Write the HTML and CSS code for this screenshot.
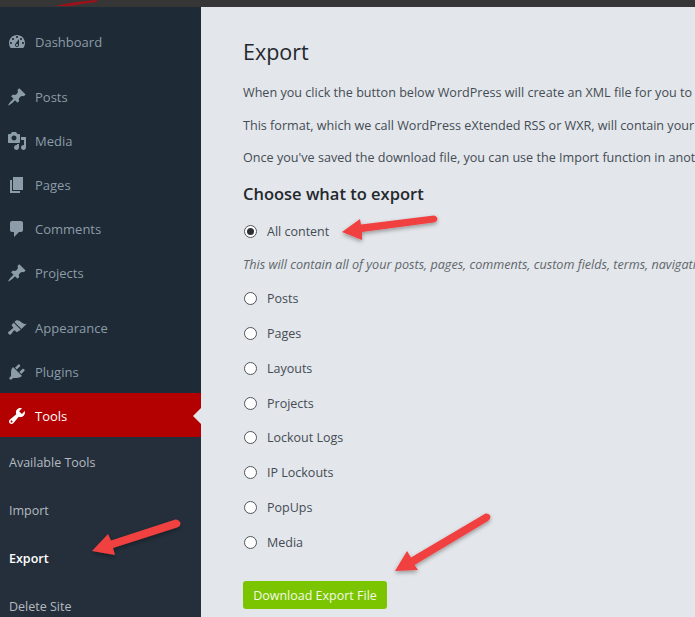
FILE: index.html
```html
<!DOCTYPE html>
<html lang="en">
<head>
<meta charset="utf-8">
<title>Export</title>
<link rel="stylesheet" href="styles.css">
</head>
<body>
<div class="topbar"></div>
<div class="shell">
  <aside class="sidebar">
    <nav class="menu">
      <a class="item"><svg class="icon" viewBox="0 0 20 20"><path fill-rule="evenodd" d="M3.76 16h12.48c1.1-1.37 1.76-3.11 1.76-5 0-4.42-3.58-8-8-8s-8 3.58-8 8c0 1.89.66 3.63 1.76 5zM10 4c.55 0 1 .45 1 1s-.45 1-1 1-1-.45-1-1 .45-1 1-1zM6 6c.55 0 1 .45 1 1s-.45 1-1 1-1-.45-1-1 .45-1 1-1zm8 0c.55 0 1 .45 1 1s-.45 1-1 1-1-.45-1-1 .45-1 1-1zm-5.37 5.55L12 7v6c0 1.1-.9 2-2 2s-2-.9-2-2c0-.57.24-1.08.63-1.45zM4 10c.55 0 1 .45 1 1s-.45 1-1 1-1-.45-1-1 .45-1 1-1zm12 0c.55 0 1 .45 1 1s-.45 1-1 1-1-.45-1-1 .45-1 1-1zm-5 3c0-.55-.45-1-1-1s-1 .45-1 1 .45 1 1 1 1-.45 1-1z"/></svg>Dashboard</a>
      <div class="sep"></div>
      <a class="item"><svg class="icon" viewBox="0 0 20 20"><path d="M10.44 3.02l1.82-1.82 6.36 6.35-1.83 1.82c-1.05-.68-2.48-.57-3.41.36l-.75.75c-.92.93-1.04 2.35-.35 3.41l-1.83 1.82-2.41-2.41-2.8 2.79c-.42.42-3.38 2.71-3.8 2.29s1.86-3.39 2.28-3.81l2.79-2.79L4.1 9.36l1.83-1.82c1.05.69 2.48.57 3.4-.36l.75-.75c.93-.92 1.05-2.35.36-3.41z"/></svg>Posts</a>
      <a class="item"><svg class="icon" viewBox="0 0 20 20"><path fill-rule="evenodd" d="M13 11V4c0-.55-.45-1-1-1h-1.67L9 1H5L3.67 3H2c-.55 0-1 .45-1 1v7c0 .55.45 1 1 1h10c.55 0 1-.45 1-1zM7 4.5c1.38 0 2.5 1.12 2.5 2.5S8.38 9.5 7 9.5 4.5 8.38 4.5 7 5.62 4.5 7 4.5zM14 6h5v10.5c0 1.38-1.12 2.5-2.5 2.5S14 17.88 14 16.5s1.12-2.5 2.5-2.5c.17 0 .34.02.5.05V9h-3V6zm-4 8.05V13h2v3.5c0 1.38-1.12 2.5-2.5 2.5S7 17.88 7 16.5 8.12 14 9.5 14c.17 0 .34.02.5.05z"/></svg>Media</a>
      <a class="item"><svg class="icon" viewBox="0 0 20 20"><path d="M6 15V2h10v13H6zm-1 1h8v2H3V5h2v11z"/></svg>Pages</a>
      <a class="item"><svg class="icon" viewBox="0 0 20 20"><path d="M5 2h9c1.1 0 2 .9 2 2v7c0 1.1-.9 2-2 2h-2l-5 5v-5H5c-1.1 0-2-.9-2-2V4c0-1.1.9-2 2-2z"/></svg>Comments</a>
      <a class="item"><svg class="icon" viewBox="0 0 20 20"><path d="M10.44 3.02l1.82-1.82 6.36 6.35-1.83 1.82c-1.05-.68-2.48-.57-3.41.36l-.75.75c-.92.93-1.04 2.35-.35 3.41l-1.83 1.82-2.41-2.41-2.8 2.79c-.42.42-3.38 2.71-3.8 2.29s1.86-3.39 2.28-3.81l2.79-2.79L4.1 9.36l1.83-1.82c1.05.69 2.48.57 3.4-.36l.75-.75c.93-.92 1.05-2.35.36-3.41z"/></svg>Projects</a>
      <div class="sep"></div>
      <a class="item"><svg class="icon" viewBox="0 0 20 20"><path d="M14.48 11.06L7.41 3.99l1.5-1.5c.5-.56 2.3-.47 3.51.32 1.21.8 1.43 1.28 2.91 2.1 1.18.64 2.45 1.26 4.45.85zm-.71.71L6.7 4.7 4.93 6.47c-.39.39-.39 1.02 0 1.41l1.06 1.06c.39.39.39 1.03 0 1.42-.6.6-1.43 1.11-2.21 1.69-.35.26-.7.53-1.01.84C1.43 13.23.7 14.38 1.17 15.3c.47.92 1.62 1.92 2.67 1.09l.07-.08.3-.3c.3-.31.57-.66.83-1.01.58-.78 1.09-1.61 1.69-2.21.39-.39 1.03-.39 1.42 0l1.06 1.06c.39.39 1.02.39 1.41 0z"/></svg>Appearance</a>
      <a class="item item-short"><svg class="icon" viewBox="0 0 20 20"><path d="M13.11 4.36L9.87 7.6 8 5.73l3.24-3.24c.35-.34 1.05-.2 1.56.32.52.51.66 1.21.31 1.55zm-8 1.77l.91-1.12 9.01 9.01-1.19.84c-.71.71-2.63 1.16-3.82 1.16H6.14L4.9 17.26c-.59.59-1.54.59-2.12 0-.59-.58-.59-1.53 0-2.12l1.24-1.24v-3.88c0-1.13.4-3.19 1.09-3.89zm7.26 3.97l3.24-3.24c.34-.35 1.04-.21 1.55.31.52.51.66 1.21.31 1.55l-3.24 3.25z"/></svg>Plugins</a>
      <a class="item item-active"><svg class="icon" viewBox="0 0 20 20"><path fill-rule="evenodd" d="M16.68 9.77c-1.34 1.34-3.3 1.67-4.95.99l-5.41 6.52c-.99.99-2.59.99-3.58 0s-.99-2.59 0-3.57l6.52-5.42c-.68-1.65-.35-3.61.99-4.95 1.28-1.28 3.12-1.62 4.72-1.06l-2.89 2.89 2.82 2.82 2.86-2.87c.53 1.58.18 3.39-1.08 4.65zM3.81 16.21c.4.39 1.04.39 1.43 0 .4-.4.4-1.04 0-1.43-.39-.4-1.03-.4-1.43 0-.39.39-.39 1.03 0 1.43z"/></svg>Tools</a>
    </nav>
    <nav class="submenu">
      <a class="subitem">Available Tools</a>
      <a class="subitem">Import</a>
      <a class="subitem subitem-current">Export</a>
      <a class="subitem">Delete Site</a>
    </nav>
  </aside>
  <main class="content">
    <h1 class="title">Export</h1>
    <p class="para">When you click the button below WordPress will create an XML file for you to save to your computer.</p>
    <p class="para">This format, which we call WordPress eXtended RSS or WXR, will contain your posts, pages, comments, custom fields, categories, and tags.</p>
    <p class="para">Once you've saved the download file, you can use the Import function in another WordPress installation to import the content from this site.</p>
    <h2 class="subtitle">Choose what to export</h2>
    <form class="options">
      <label class="option"><input class="radio" type="radio" name="content" checked>All content</label>
      <p class="note">This will contain all of your posts, pages, comments, custom fields, terms, navigation menus, and custom posts.</p>
      <label class="option"><input class="radio" type="radio" name="content">Posts</label>
      <label class="option"><input class="radio" type="radio" name="content">Pages</label>
      <label class="option"><input class="radio" type="radio" name="content">Layouts</label>
      <label class="option"><input class="radio" type="radio" name="content">Projects</label>
      <label class="option"><input class="radio" type="radio" name="content">Lockout Logs</label>
      <label class="option"><input class="radio" type="radio" name="content">IP Lockouts</label>
      <label class="option"><input class="radio" type="radio" name="content">PopUps</label>
      <label class="option"><input class="radio" type="radio" name="content">Media</label>
      <button class="download" type="button">Download Export File</button>
    </form>
  </main>
</div>
<svg class="annotations" viewBox="0 0 695 617" aria-hidden="true">
  <defs>
    <filter id="shadow" x="-20%" y="-40%" width="140%" height="200%">
      <feDropShadow dx="0" dy="2" stdDeviation="2" flood-color="#000" flood-opacity=".35"/>
    </filter>
  </defs>
  <path class="scratch" d="M55 6 C68 3 82 1 97 0 L97 2 C84 3 78 5 70 6Z"/>
  <g filter="url(#shadow)">
    <path class="arrow" d="M342 232 L360 219 L361 224.5 L434 215.5 Q437 216 437.5 219 Q437 222 433.5 222.5 L362 232 L362 240Z"/>
    <path class="arrow" d="M92 551 L108 534 L111 540.5 L175.5 519.5 Q179 519.5 180.5 523 Q180.5 526.5 177 527.5 L113 548 L115 555Z"/>
    <path class="arrow" d="M395 571 L407 551 L411 557.5 L485.5 513.5 Q489 513 490.5 516 Q490.5 519.5 488 521 L414.5 565 L418 570Z"/>
  </g>
</svg>
</body>
</html>
```
FILE: styles.css
```css
html, body {
  margin: 0;
  height: 617px;
  overflow: hidden;
  background: #e3e6ea;
}
body {
  font-family: "Open Sans", sans-serif;
  font-size: 13px;
  color: #444c55;
  position: relative;
}
.topbar {
  height: 7px;
  background: #363636;
}
.shell {
  display: flex;
  height: 610px;
  overflow: hidden;
}
.sidebar {
  flex: 0 0 201px;
  background: #1e2a35;
  display: flex;
  flex-direction: column;
  padding-top: 13px;
  box-sizing: border-box;
}
.menu {
  display: flex;
  flex-direction: column;
}
.item {
  height: 44px;
  display: flex;
  align-items: center;
  padding-left: 7px;
  gap: 8px;
  color: #8c9ca8;
  font-size: 13px;
  flex: none;
}
.item-short {
  height: 43px;
}
.icon {
  width: 20px;
  height: 20px;
  fill: #8c9ca8;
  flex: none;
}
.sep {
  height: 11px;
}
.item-active {
  background: #b30000;
  color: #fff;
  position: relative;
  box-sizing: border-box;
  padding-top: 2px;
}
.item-active .icon {
  fill: #fff;
}
.item-active::after {
  content: "";
  position: absolute;
  right: 0;
  top: 15px;
  border: 8px solid transparent;
  border-right-color: #e3e6ea;
  border-left-width: 0;
}
.submenu {
  flex: 1;
  background: #242f3b;
  display: flex;
  flex-direction: column;
  padding-top: 1px;
}
.subitem {
  height: 48px;
  flex: none;
  display: flex;
  align-items: center;
  padding-left: 9px;
  color: #b4bac0;
  font-size: 12.5px;
}
.subitem-current {
  color: #fff;
  font-weight: 600;
}
.content {
  flex: 1;
  min-width: 0;
  padding: 28px 0 0 42px;
  overflow: hidden;
  white-space: nowrap;
}
.title {
  margin: 0;
  font-size: 21.5px;
  line-height: 34px;
  font-weight: 400;
  color: #23282d;
}
.para {
  margin: 0 0 12.5px;
  line-height: 20px;
  font-size: 12.6px;
  color: #444c55;
}
.title + .para {
  margin-top: 14px;
}
.subtitle {
  margin: 14px 0 0;
  font-size: 16.5px;
  line-height: 24px;
  font-weight: 600;
  color: #23282d;
}
.options {
  display: flex;
  flex-direction: column;
  margin-top: 8px;
  align-items: flex-start;
}
.option {
  display: flex;
  align-items: center;
  height: 34.8px;
  font-size: 12.5px;
  color: #444c55;
}
.note {
  margin: 0;
  height: 32.6px;
  line-height: 32px;
  font-style: italic;
  font-size: 12.6px;
  color: #5f666d;
}
.radio {
  appearance: none;
  margin: 0 10px 0 1px;
  width: 13px;
  height: 13px;
  border: 1.5px solid #50565c;
  border-radius: 50%;
  background: #fff;
  box-sizing: border-box;
  position: relative;
  flex: none;
}
.radio:checked::before {
  content: "";
  position: absolute;
  inset: 2px;
  border-radius: 50%;
  background: #2c3035;
}
.download {
  margin-top: 21.5px;
  width: 144px;
  height: 28px;
  padding: 0;
  border: 0;
  border-radius: 3px;
  background: #7ac400;
  color: #f4fae8;
  font-family: inherit;
  font-size: 12.5px;
}
.annotations {
  position: absolute;
  left: 0;
  top: 0;
  width: 695px;
  height: 617px;
  pointer-events: none;
}
.arrow {
  fill: #f04040;
}
.scratch {
  fill: #a01018;
}
```
